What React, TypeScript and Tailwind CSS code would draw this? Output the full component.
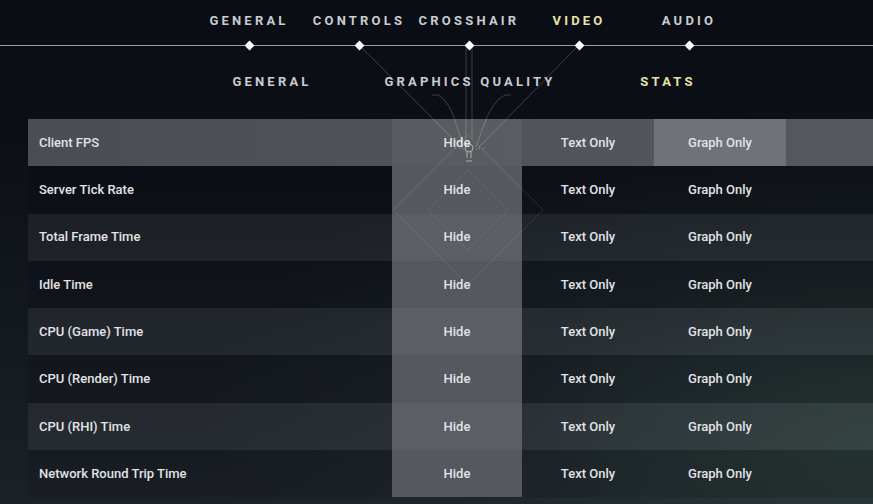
import React from 'react'

const topTabs = [
  { label: 'GENERAL', active: false },
  { label: 'CONTROLS', active: false },
  { label: 'CROSSHAIR', active: false },
  { label: 'VIDEO', active: true },
  { label: 'AUDIO', active: false },
]

const subTabs = [
  { label: 'GENERAL', active: false },
  { label: 'GRAPHICS QUALITY', active: false },
  { label: 'STATS', active: true },
]

const stats = [
  'Client FPS',
  'Server Tick Rate',
  'Total Frame Time',
  'Idle Time',
  'CPU (Game) Time',
  'CPU (Render) Time',
  'CPU (RHI) Time',
  'Network Round Trip Time',
]

function Decoration() {
  return (
    <svg
      className="pointer-events-none absolute inset-0"
      width="873"
      height="504"
      viewBox="0 0 873 504"
      fill="none"
    >
      <g stroke="#ffffff" strokeOpacity="0.2" strokeWidth="1">
        {/* diagonals from the tab diamonds */}
        <path d="M359 45 L464 150" />
        <path d="M579 45 L476 150" />
        {/* double vertical from crosshair */}
        <path d="M466 45 V140" />
        <path d="M472 45 V140" />
        {/* curves from graphics quality */}
        <path d="M432 95 H438 Q450 100 458 130 Q462 142 463 147" />
        <path d="M511 95 H505 Q492 100 482 130 Q478 142 476 147" />
        {/* big diamond in hide column */}
        <path d="M468 135 L543 210 L468 285 L393 210 Z" strokeOpacity="0.1" />
        <path d="M468 170 L508 210 L468 250 L428 210 Z" strokeOpacity="0.08" />
      </g>
      <g stroke="#ffffff" strokeOpacity="0.5" strokeWidth="1">
        <circle cx="469" cy="148" r="4" />
        <path d="M467 152 V158 M471 152 V158" />
        <path d="M466 161 H472" />
      </g>
      <g fill="#ffffff" fillOpacity="0.35">
        <rect x="455" y="148" width="1" height="1" />
        <rect x="459" y="148" width="1" height="1" />
        <rect x="479" y="148" width="1" height="1" />
        <rect x="483" y="148" width="1" height="1" />
      </g>
    </svg>
  )
}

export default function App() {
  return (
    <div
      className="relative h-[504px] w-[873px] overflow-hidden bg-[#0b0e15] text-[#e1e3e6]"
      style={{ fontFamily: 'Roboto, "Noto Sans", sans-serif' }}
    >
      <div className="pointer-events-none absolute inset-0 bg-[linear-gradient(180deg,#0a0d14_0%,#0c0f16_28%,#13171e_60%,#1c2128_100%)]" />
      <div className="pointer-events-none absolute inset-0 bg-[radial-gradient(ellipse_at_100%_88%,rgba(58,82,74,0.5)_0%,rgba(45,64,60,0.22)_30%,transparent_55%)]" />

      <div className="relative">
        {/* top tabs */}
        <div className="flex h-[45px] items-center pb-[3px] pl-[194px]">
          {topTabs.map((t) => (
            <div
              key={t.label}
              className={`w-[110px] text-center text-[13px] font-bold tracking-[3.2px] ${
                t.active ? 'text-[#e6e3a7]' : 'text-[#c9ccd1]'
              }`}
            >
              {t.label}
            </div>
          ))}
        </div>
        <div className="relative h-px bg-[#9a9ea4]">
          <div className="absolute left-0 top-0 flex pl-[194px]">
            {topTabs.map((t) => (
              <div key={t.label} className="flex w-[110px] justify-center">
                <div className="-mt-[3px] h-[7px] w-[7px] rotate-45 bg-white" />
              </div>
            ))}
          </div>
        </div>

        {/* sub tabs */}
        <div className="flex h-[73px] items-start pl-[173px] pt-[28px]">
          {subTabs.map((t) => (
            <div
              key={t.label}
              className={`w-[198px] text-center text-[13px] font-bold leading-4 tracking-[3.2px] ${
                t.active ? 'text-[#e6e3a7]' : 'text-[#c9ccd1]'
              }`}
            >
              {t.label}
            </div>
          ))}
        </div>

        {/* stats table */}
        <div className="ml-[28px] flex flex-col text-[13px] font-medium">
          {stats.map((name, i) => {
            const hovered = i === 0
            const odd = i % 2 === 0
            const rowBg = hovered
              ? 'bg-[linear-gradient(90deg,#4a4d53,#55585e)]'
              : odd
                ? 'bg-white/[0.06]'
                : 'bg-black/[0.1]'
            const hideBg = hovered ? 'bg-white/[0.05]' : odd ? 'bg-[#5b5e64]' : 'bg-[#55585e]'
            return (
              <div key={name} className={`flex h-[47.3px] items-center ${rowBg}`}>
                <div className="w-[364px] pl-[11px]">{name}</div>
                <div className={`flex h-full w-[130px] items-center justify-center ${hideBg}`}>
                  Hide
                </div>
                <div className="flex h-full w-[132px] items-center justify-center">Text Only</div>
                <div
                  className={`flex h-full w-[132px] items-center justify-center ${
                    hovered ? 'bg-[#6f7278]' : ''
                  }`}
                >
                  Graph Only
                </div>
                <div className="flex-1" />
              </div>
            )
          })}
        </div>
      </div>

      <Decoration />
    </div>
  )
}
